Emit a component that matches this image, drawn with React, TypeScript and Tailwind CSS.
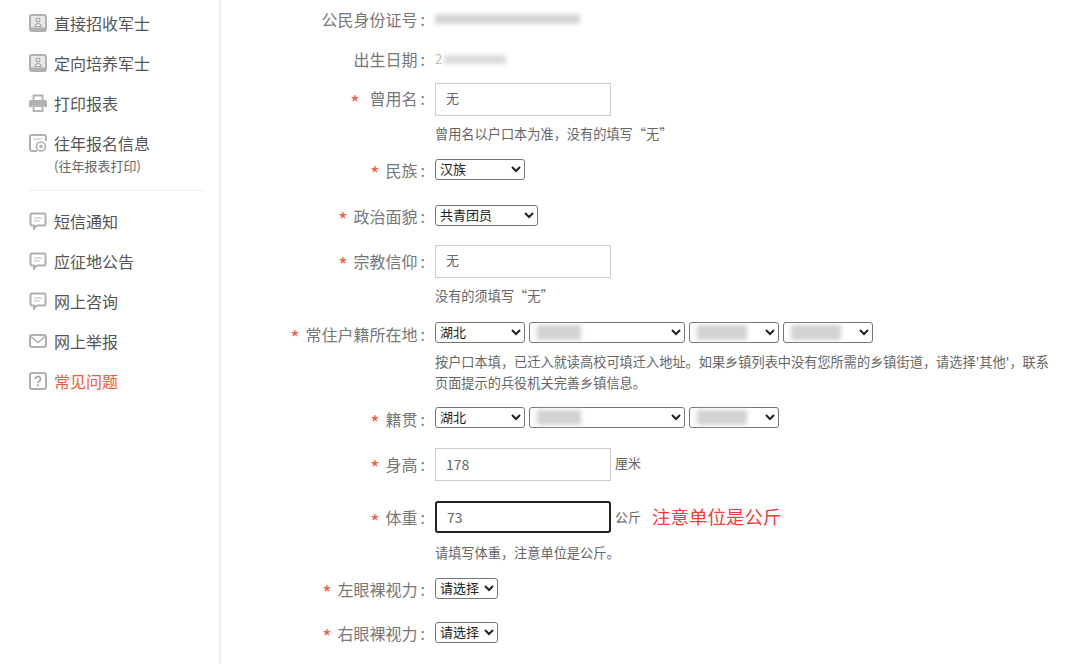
import React from 'react';

const font = { fontFamily: '"Noto Sans CJK SC", "Liberation Sans", sans-serif' };

const IdIcon = () => (
  <svg width="18" height="18" viewBox="0 0 18 18" fill="none">
    <rect x="1" y="1" width="16" height="16" rx="2" fill="#e8e8e8" stroke="#b0b0b0" strokeWidth="2" />
    <rect x="1" y="13.500" width="16" height="3.500" fill="#b0b0b0" />
    <circle cx="9" cy="6" r="1.900" stroke="#aaa" strokeWidth="1.200" />
    <path d="M6 12.500c0-2 1.300-3 3-3s3 1 3 3z" stroke="#aaa" strokeWidth="1.200" />
  </svg>
);

const PrintIcon = () => (
  <svg width="18" height="18" viewBox="0 0 18 18" fill="none">
    <path d="M4.500 6V1.500h9V6" stroke="#b0b0b0" strokeWidth="1.800" />
    <path d="M2 6h14a2 2 0 0 1 2 2v5h-3.500v-2h-11v2H0V8a2 2 0 0 1 2-2z" fill="#b0b0b0" />
    <rect x="4.500" y="12" width="9" height="5" stroke="#b0b0b0" strokeWidth="1.800" />
  </svg>
);

const HistoryIcon = () => (
  <svg width="18" height="18" viewBox="0 0 18 18" fill="none">
    <path d="M8 17H3a2 2 0 0 1-2-2V3a2 2 0 0 1 2-2h12a2 2 0 0 1 2 2v4" stroke="#b0b0b0" strokeWidth="2" />
    <path d="M4 5h9" stroke="#c8c8c8" strokeWidth="1.200" />
    <circle cx="12" cy="12.500" r="4.500" fill="#fff" stroke="#b0b0b0" strokeWidth="1.600" />
    <circle cx="12" cy="12.500" r="1.800" fill="#b0b0b0" />
  </svg>
);

const ChatIcon = () => (
  <svg width="18" height="18" viewBox="0 0 18 18" fill="none">
    <path d="M3 1.500h12A1.500 1.500 0 0 1 16.500 3v9a1.500 1.500 0 0 1-1.500 1.500H8l-3 3v-3H3A1.500 1.500 0 0 1 1.500 12V3A1.500 1.500 0 0 1 3 1.500z" stroke="#b0b0b0" strokeWidth="2" />
    <path d="M5 6h8M5 9h5.500" stroke="#bbb" strokeWidth="1.200" />
  </svg>
);

const MailIcon = () => (
  <svg width="18" height="18" viewBox="0 0 18 18" fill="none">
    <rect x="1" y="3" width="16" height="12" rx="2" stroke="#b0b0b0" strokeWidth="2" />
    <path d="M2 4.500l7 6 7-6" stroke="#b0b0b0" strokeWidth="1.600" />
  </svg>
);

const HelpIcon = () => (
  <svg width="18" height="18" viewBox="0 0 18 18" fill="none">
    <rect x="1" y="1" width="16" height="16" rx="2" stroke="#b0b0b0" strokeWidth="2" />
    <path d="M6.500 7a2.500 2.500 0 1 1 3.800 2.100c-.9.600-1.300 1-1.300 2.100" stroke="#a5a5a5" strokeWidth="1.700" />
    <rect x="8.100" y="12.400" width="1.800" height="1.900" fill="#a5a5a5" />
  </svg>
);

const NavItem = ({ icon, label, sub, active }: { icon: React.ReactNode; label: string; sub?: string; active?: boolean }) => (
  <div className="flex gap-[7px] mt-[16px] first:mt-0">
    <div className="w-[18px] h-[24px] flex items-center shrink-0">{icon}</div>
    <div>
      <div className={`text-[16px] leading-[24px] ${active ? 'text-[#f4593a]' : 'text-[#555]'}`}>{label}</div>
      {sub && <div className="text-[13px] leading-[20px] mt-[1px] text-[#666]">{sub}</div>}
    </div>
  </div>
);

const Row = ({ label, required, tight, className, labelClass, children }: { label: string; required?: boolean; tight?: boolean; className?: string; labelClass?: string; children: React.ReactNode }) => (
  <div className={`flex items-start ${className ?? ''}`}>
    <div className={`w-[204px] shrink-0 flex justify-end items-center text-[16px] h-full text-[#777] ${labelClass ?? ''}`}>
      {required && (
        <span className={`text-[20px] leading-none pt-[9px] text-[#f4593a] ${tight ? 'mr-[6px]' : 'mr-[10px]'}`}>*</span>
      )}
      <span>{label}</span>
      <span className="ml-[3px]">:</span>
    </div>
    <div className="ml-[10px] flex-1 min-w-0">{children}</div>
  </div>
);

const Pick = ({ w, value, blur }: { w: string; value?: string; blur?: string }) => (
  <div className={`relative h-[21px] ${w}`}>
    <select className="block w-full h-full border border-[#767676] rounded-[3px] bg-white text-[13px] text-[#222] font-['Liberation_Sans','Noto_Sans_CJK_SC',sans-serif]" defaultValue={value ?? ''}>
      <option value={value ?? ''}>{value ?? ''}</option>
    </select>
    {blur && <div className={`absolute top-[3px] left-[8px] h-[15px] bg-[#d2d2d2] blur-[2px] ${blur}`} />}
  </div>
);

const Field = ({ value, focus, textClass }: { value: string; focus?: boolean; textClass?: string }) => (
  <div className={`w-[176px] flex items-center pl-[10px] text-[#666] bg-white ${textClass ?? 'text-[14px]'} ${focus ? 'h-[32px] border-2 border-[#222] rounded-[3px]' : 'h-[33px] border border-[#ccc]'}`}>
    {value}
  </div>
);

const Hint = ({ mt, children }: { mt: string; children: React.ReactNode }) => (
  <p className={`pl-[214px] text-[13.2px] leading-[21px] text-[#666] ${mt}`}>{children}</p>
);

export default function App() {
  return (
    <div className="w-[1080px] h-[664px] overflow-hidden bg-white flex" style={font}>
      <aside className="w-[221px] h-full shrink-0 border-r-2 border-[#eeeeee] pl-[29px] pr-[15px] pt-[11px]">
        <NavItem icon={<IdIcon />} label="直接招收军士" />
        <NavItem icon={<IdIcon />} label="定向培养军士" />
        <NavItem icon={<PrintIcon />} label="打印报表" />
        <NavItem icon={<HistoryIcon />} label="往年报名信息" sub="(往年报表打印)" />
        <div className="border-t border-dotted border-[#ddd] mt-[14px] mb-[18px]" />
        <NavItem icon={<ChatIcon />} label="短信通知" />
        <NavItem icon={<ChatIcon />} label="应征地公告" />
        <NavItem icon={<ChatIcon />} label="网上咨询" />
        <NavItem icon={<MailIcon />} label="网上举报" />
        <NavItem icon={<HelpIcon />} label="常见问题" active />
      </aside>

      <main className="flex-1 min-w-0 pr-[24px] pt-[7px]">
        <Row label="公民身份证号" className="h-[24px]">
          <div className="h-[24px] flex items-center">
            <div className="w-[145px] h-[10px] bg-[#d2d4d6] blur-[2px]" />
          </div>
        </Row>
        <Row label="出生日期" className="h-[24px] mt-[16px]">
          <div className="h-[24px] flex items-center gap-[2px]">
            <span className="text-[13px] text-[#bbb]">2</span>
            <div className="w-[62px] h-[9px] bg-[#dcdcdc] blur-[2px]" />
          </div>
        </Row>

        <Row label="曾用名" required labelClass="pb-[3px]" className="h-[33px] mt-[12px]">
          <Field value="无" textClass="text-[13px] pb-[3px]" />
        </Row>
        <Hint mt="mt-[7px]">曾用名以户口本为准，没有的填写“无”</Hint>

        <Row label="民族" required tight className="h-[21px] mt-[15px]">
          <Pick w="w-[90px]" value="汉族" />
        </Row>
        <Row label="政治面貌" required tight className="h-[21px] mt-[25px]">
          <Pick w="w-[103px]" value="共青团员" />
        </Row>

        <Row label="宗教信仰" required tight labelClass="pb-[2px]" className="h-[33px] mt-[19px]">
          <Field value="无" textClass="text-[13px] pb-[3px]" />
        </Row>
        <Hint mt="mt-[7px]">没有的须填写“无”</Hint>

        <Row label="常住户籍所在地" required tight labelClass="pt-[2px]" className="h-[21px] mt-[16px]">
          <div className="flex gap-[4px]">
            <Pick w="w-[90px]" value="湖北" />
            <Pick w="w-[156px]" blur="w-[44px]" />
            <Pick w="w-[90px]" blur="w-[50px]" />
            <Pick w="w-[90px]" blur="w-[50px]" />
          </div>
        </Row>
        <Hint mt="mt-[8px]">按户口本填，已迁入就读高校可填迁入地址。如果乡镇列表中没有您所需的乡镇街道，请选择'其他'，联系页面提示的兵役机关完善乡镇信息。</Hint>

        <Row label="籍贯" required tight labelClass="pt-[2px]" className="h-[21px] mt-[14px]">
          <div className="flex gap-[4px]">
            <Pick w="w-[90px]" value="湖北" />
            <Pick w="w-[156px]" blur="w-[44px]" />
            <Pick w="w-[90px]" blur="w-[50px]" />
          </div>
        </Row>

        <Row label="身高" required tight labelClass="pb-[2px]" className="h-[33px] mt-[20px]">
          <div className="flex items-start gap-[4px]">
            <Field value="178" />
            <span className="text-[13px] leading-[30px] text-[#666]">厘米</span>
          </div>
        </Row>

        <Row label="体重" required tight className="h-[32px] mt-[20px]">
          <div className="flex items-center gap-[4px]">
            <Field value="73" focus />
            <span className="text-[13px] text-[#666]">公斤</span>
            <span className="ml-[7px] text-[18.5px] text-[#f73c3c]">注意单位是公斤</span>
          </div>
        </Row>
        <Hint mt="mt-[9px]">请填写体重，注意单位是公斤。</Hint>

        <Row label="左眼裸视力" required tight className="h-[21px] mt-[15px]">
          <Pick w="w-[63px]" value="请选择" />
        </Row>
        <Row label="右眼裸视力" required tight className="h-[21px] mt-[23px]">
          <Pick w="w-[63px]" value="请选择" />
        </Row>
      </main>
    </div>
  );
}
